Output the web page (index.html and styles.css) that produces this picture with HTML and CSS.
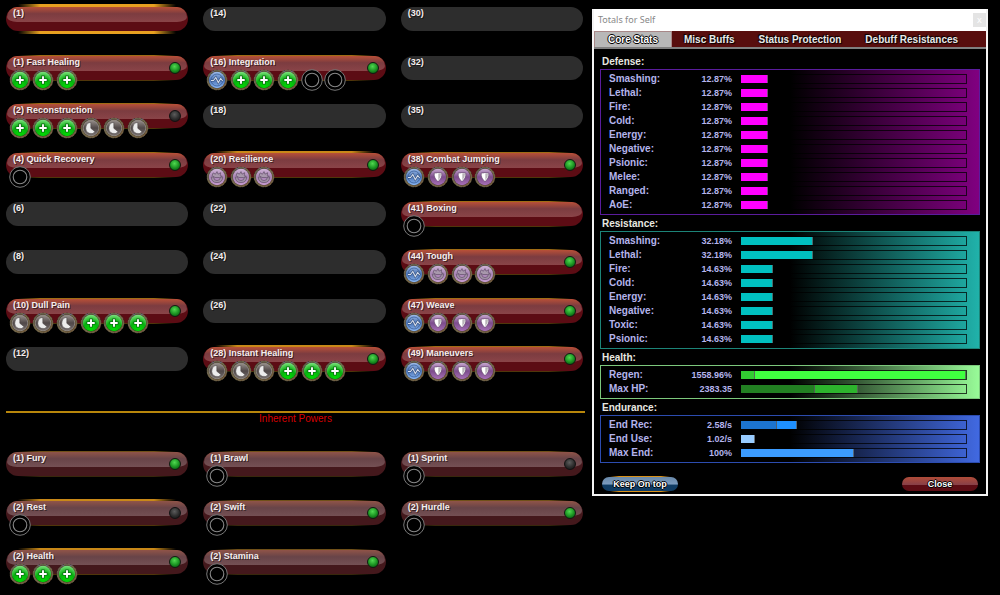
FILE: index.html
```html
<!DOCTYPE html>
<html lang="en">
<head>
<meta charset="utf-8">
<title>Totals for Self</title>
<link rel="stylesheet" href="styles.css">
</head>
<body>
<svg class="defs" width="0" height="0" aria-hidden="true">
  <defs>
    <radialGradient id="gGreen" cx="50%" cy="80%" r="85%"><stop offset="0" stop-color="#00e000"/><stop offset=".5" stop-color="#08b010"/><stop offset="1" stop-color="#90e890"/></radialGradient>
    <linearGradient id="gBlue" x1="0" y1="0" x2="0" y2="1"><stop offset="0" stop-color="#a0bce8"/><stop offset=".5" stop-color="#4c74b4"/><stop offset="1" stop-color="#8cb8f4"/></linearGradient>
    <linearGradient id="gPurple" x1="0" y1="0" x2="0" y2="1"><stop offset="0" stop-color="#c8a8d0"/><stop offset=".5" stop-color="#7c4c8c"/><stop offset="1" stop-color="#a870b8"/></linearGradient>
    <linearGradient id="gLilac" x1="0" y1="0" x2="0" y2="1"><stop offset="0" stop-color="#d0b4d8"/><stop offset=".5" stop-color="#a884b4"/><stop offset="1" stop-color="#c89cd0"/></linearGradient>
    <linearGradient id="gGrey" x1="0" y1="0" x2="0" y2="1"><stop offset="0" stop-color="#98908c"/><stop offset=".5" stop-color="#504848"/><stop offset="1" stop-color="#787070"/></linearGradient>
    <linearGradient id="gRing" x1="0" y1="0" x2="1" y2="1"><stop offset="0" stop-color="#5c574c"/><stop offset=".5" stop-color="#786a48"/><stop offset=".85" stop-color="#705838"/><stop offset="1" stop-color="#b04830"/></linearGradient>
  </defs>
  <symbol id="ring" viewBox="0 0 22 22">
    <circle cx="11" cy="11" r="10.3" fill="#2a241a"/>
    <circle cx="11" cy="11" r="9.2" fill="none" stroke="url(#gRing)" stroke-width="1.6"/>
    <circle cx="11" cy="11" r="9.8" fill="none" stroke="#7c745c" stroke-width=".7" stroke-dasharray="2.4 1.5"/>
    <path d="M6.5 1.8l1.5 1.6M15.5 1.8L14 3.4" stroke="#6c6498" stroke-width="1"/>
  </symbol>
  <symbol id="heal" viewBox="0 0 22 22"><use href="#ring"/><circle cx="11" cy="11" r="8.2" fill="url(#gGreen)"/><path d="M11 6.600v8.800M6.600 11h8.800" stroke="#0c5c14" stroke-width="3.200"/><path d="M11 7.300v7.400M7.300 11h7.400" stroke="#fff" stroke-width="1.900"/></symbol>
  <symbol id="end" viewBox="0 0 22 22"><use href="#ring"/><circle cx="11" cy="11" r="8.2" fill="url(#gBlue)"/><circle cx="11" cy="11" r="6" fill="none" stroke="#38609c" stroke-width=".8"/><path d="M5 11.500h2.500l2.300-3 2.500 5 2.400-4 2 2.500" fill="none" stroke="#34507c" stroke-width="2.200"/><path d="M5 11.500h2.500l2.300-3 2.500 5 2.400-4 2 2.500" fill="none" stroke="#d4dcec" stroke-width="1.100"/></symbol>
  <symbol id="def" viewBox="0 0 22 22"><use href="#ring"/><circle cx="11" cy="11" r="8.2" fill="url(#gPurple)"/><path d="M7.200 7q3.800 0 3.800-.6 0 .6 3.800.6.400 5.400-3.800 8.600-4.200-3.200-3.800-8.600z" fill="#fff" stroke="#583860" stroke-width=".6"/><path d="M11.300 7.600h2.700q.2 4-2.700 6.800z" fill="#b8b4b8"/></symbol>
  <symbol id="res" viewBox="0 0 22 22"><use href="#ring"/><circle cx="11" cy="11" r="8.2" fill="url(#gLilac)"/><path d="M5.300 11h2.200q.4 3.600 3.500 3.600t3.500-3.600h2.200q-.2 5.600-5.700 5.600T5.300 11z" fill="#a090a4" stroke="#6c5874" stroke-width=".8"/><path d="M6 9.500l1.200-2.600 2.200 1.300L11 5.600l1 2.600 2.700-1.500-.5 2.800 2 .8-2.700 1.200H9z" fill="#a898ac" stroke="#6c5874" stroke-width=".8"/></symbol>
  <symbol id="rech" viewBox="0 0 22 22"><use href="#ring"/><circle cx="11" cy="11" r="7.800" fill="url(#gGrey)" stroke="#a8a098" stroke-width=".7"/><path d="M10.800 5.500v5.800l4.300 3.400a5.300 5.300 0 0 1-9.400-3.400q0-4.300 3.200-5.600z" fill="#ececec" stroke="#3c3838" stroke-width=".5"/></symbol>
  <symbol id="empty" viewBox="0 0 22 22"><circle cx="11" cy="11" r="10.300" fill="#000" stroke="#777" stroke-width="1"/><circle cx="11" cy="11" r="6.800" fill="none" stroke="#888" stroke-width="1.100"/></symbol>
</svg>

<div class="app">
  <main class="build">
    <ul class="powers powers-chosen">
      <li class="power glow-full"><button class="pill">(1)</button></li>
      <li class="power"><button class="pill">(1) Fast Healing<i class="led"></i></button><div class="slots"><svg><use href="#heal"/></svg><svg><use href="#heal"/></svg><svg><use href="#heal"/></svg></div></li>
      <li class="power"><button class="pill">(2) Reconstruction<i class="led off"></i></button><div class="slots"><svg><use href="#heal"/></svg><svg><use href="#heal"/></svg><svg><use href="#heal"/></svg><svg><use href="#rech"/></svg><svg><use href="#rech"/></svg><svg><use href="#rech"/></svg></div></li>
      <li class="power"><button class="pill">(4) Quick Recovery<i class="led"></i></button><div class="slots"><svg><use href="#empty"/></svg></div></li>
      <li class="power vacant"><button class="pill">(6)</button></li>
      <li class="power vacant"><button class="pill">(8)</button></li>
      <li class="power"><button class="pill">(10) Dull Pain<i class="led"></i></button><div class="slots"><svg><use href="#rech"/></svg><svg><use href="#rech"/></svg><svg><use href="#rech"/></svg><svg><use href="#heal"/></svg><svg><use href="#heal"/></svg><svg><use href="#heal"/></svg></div></li>
      <li class="power vacant"><button class="pill">(12)</button></li>

      <li class="power vacant"><button class="pill">(14)</button></li>
      <li class="power"><button class="pill">(16) Integration<i class="led"></i></button><div class="slots"><svg><use href="#end"/></svg><svg><use href="#heal"/></svg><svg><use href="#heal"/></svg><svg><use href="#heal"/></svg><svg><use href="#empty"/></svg><svg><use href="#empty"/></svg></div></li>
      <li class="power vacant"><button class="pill">(18)</button></li>
      <li class="power glow-top"><button class="pill">(20) Resilience<i class="led"></i></button><div class="slots"><svg><use href="#res"/></svg><svg><use href="#res"/></svg><svg><use href="#res"/></svg></div></li>
      <li class="power vacant"><button class="pill">(22)</button></li>
      <li class="power vacant"><button class="pill">(24)</button></li>
      <li class="power vacant"><button class="pill">(26)</button></li>
      <li class="power glow-top"><button class="pill">(28) Instant Healing<i class="led"></i></button><div class="slots"><svg><use href="#rech"/></svg><svg><use href="#rech"/></svg><svg><use href="#rech"/></svg><svg><use href="#heal"/></svg><svg><use href="#heal"/></svg><svg><use href="#heal"/></svg></div></li>

      <li class="power vacant"><button class="pill">(30)</button></li>
      <li class="power vacant"><button class="pill">(32)</button></li>
      <li class="power vacant"><button class="pill">(35)</button></li>
      <li class="power"><button class="pill">(38) Combat Jumping<i class="led"></i></button><div class="slots"><svg><use href="#end"/></svg><svg><use href="#def"/></svg><svg><use href="#def"/></svg><svg><use href="#def"/></svg></div></li>
      <li class="power"><button class="pill">(41) Boxing</button><div class="slots"><svg><use href="#empty"/></svg></div></li>
      <li class="power"><button class="pill">(44) Tough<i class="led"></i></button><div class="slots"><svg><use href="#end"/></svg><svg><use href="#res"/></svg><svg><use href="#res"/></svg><svg><use href="#res"/></svg></div></li>
      <li class="power"><button class="pill">(47) Weave<i class="led"></i></button><div class="slots"><svg><use href="#end"/></svg><svg><use href="#def"/></svg><svg><use href="#def"/></svg><svg><use href="#def"/></svg></div></li>
      <li class="power"><button class="pill">(49) Maneuvers<i class="led"></i></button><div class="slots"><svg><use href="#end"/></svg><svg><use href="#def"/></svg><svg><use href="#def"/></svg><svg><use href="#def"/></svg></div></li>
    </ul>

    <h2 class="divider">Inherent Powers</h2>

    <ul class="powers powers-inherent">
      <li class="power"><button class="pill">(1) Fury<i class="led"></i></button></li>
      <li class="power glow-top"><button class="pill">(2) Rest<i class="led off"></i></button><div class="slots"><svg><use href="#empty"/></svg></div></li>
      <li class="power glow-top"><button class="pill">(2) Health<i class="led"></i></button><div class="slots"><svg><use href="#heal"/></svg><svg><use href="#heal"/></svg><svg><use href="#heal"/></svg></div></li>
      <li class="power"><button class="pill">(1) Brawl</button><div class="slots"><svg><use href="#empty"/></svg></div></li>
      <li class="power"><button class="pill">(2) Swift<i class="led"></i></button><div class="slots"><svg><use href="#empty"/></svg></div></li>
      <li class="power"><button class="pill">(2) Stamina<i class="led"></i></button><div class="slots"><svg><use href="#empty"/></svg></div></li>
      <li class="power"><button class="pill">(1) Sprint<i class="led off"></i></button><div class="slots"><svg><use href="#empty"/></svg></div></li>
      <li class="power"><button class="pill">(2) Hurdle<i class="led"></i></button><div class="slots"><svg><use href="#empty"/></svg></div></li>
    </ul>
  </main>

  <section class="totals">
    <header class="titlebar"><span>Totals for Self</span><button class="close-x" aria-label="Close window">x</button></header>
    <nav class="tabs">
      <button class="tab active">Core Stats</button>
      <button class="tab">Misc Buffs</button>
      <button class="tab">Status Protection</button>
      <button class="tab">Debuff Resistances</button>
    </nav>
    <div class="stats">
      <h3>Defense:</h3>
      <dl class="group defense">
        <div><dt>Smashing:</dt><dd>12.87%</dd><dd class="track"><i style="width:12%"></i></dd></div>
        <div><dt>Lethal:</dt><dd>12.87%</dd><dd class="track"><i style="width:12%"></i></dd></div>
        <div><dt>Fire:</dt><dd>12.87%</dd><dd class="track"><i style="width:12%"></i></dd></div>
        <div><dt>Cold:</dt><dd>12.87%</dd><dd class="track"><i style="width:12%"></i></dd></div>
        <div><dt>Energy:</dt><dd>12.87%</dd><dd class="track"><i style="width:12%"></i></dd></div>
        <div><dt>Negative:</dt><dd>12.87%</dd><dd class="track"><i style="width:12%"></i></dd></div>
        <div><dt>Psionic:</dt><dd>12.87%</dd><dd class="track"><i style="width:12%"></i></dd></div>
        <div><dt>Melee:</dt><dd>12.87%</dd><dd class="track"><i style="width:12%"></i></dd></div>
        <div><dt>Ranged:</dt><dd>12.87%</dd><dd class="track"><i style="width:12%"></i></dd></div>
        <div><dt>AoE:</dt><dd>12.87%</dd><dd class="track"><i style="width:12%"></i></dd></div>
      </dl>
      <h3>Resistance:</h3>
      <dl class="group resistance">
        <div><dt>Smashing:</dt><dd>32.18%</dd><dd class="track"><i style="width:32%"></i></dd></div>
        <div><dt>Lethal:</dt><dd>32.18%</dd><dd class="track"><i style="width:32%"></i></dd></div>
        <div><dt>Fire:</dt><dd>14.63%</dd><dd class="track"><i style="width:14%"></i></dd></div>
        <div><dt>Cold:</dt><dd>14.63%</dd><dd class="track"><i style="width:14%"></i></dd></div>
        <div><dt>Energy:</dt><dd>14.63%</dd><dd class="track"><i style="width:14%"></i></dd></div>
        <div><dt>Negative:</dt><dd>14.63%</dd><dd class="track"><i style="width:14%"></i></dd></div>
        <div><dt>Toxic:</dt><dd>14.63%</dd><dd class="track"><i style="width:14%"></i></dd></div>
        <div><dt>Psionic:</dt><dd>14.63%</dd><dd class="track"><i style="width:14%"></i></dd></div>
      </dl>
      <h3>Health:</h3>
      <dl class="group health">
        <div><dt>Regen:</dt><dd>1558.96%</dd><dd class="track"><i class="regen-base" style="width:6%"></i><i class="regen" style="width:94%"></i></dd></div>
        <div><dt>Max HP:</dt><dd>2383.35</dd><dd class="track"><i class="hp-base" style="width:33%"></i><i class="hp" style="width:19%"></i></dd></div>
      </dl>
      <h3>Endurance:</h3>
      <dl class="group endurance">
        <div><dt>End Rec:</dt><dd>2.58/s</dd><dd class="track"><i class="rec-base" style="width:16%"></i><i class="rec" style="width:9%"></i></dd></div>
        <div><dt>End Use:</dt><dd>1.02/s</dd><dd class="track"><i class="use" style="width:6%"></i></dd></div>
        <div><dt>Max End:</dt><dd>100%</dd><dd class="track"><i class="max" style="width:50%"></i></dd></div>
      </dl>
      <footer class="actions">
        <button class="action keep">Keep On top</button>
        <button class="action">Close</button>
      </footer>
    </div>
  </section>
</div>
</body>
</html>
```
FILE: styles.css
```css
* { box-sizing: border-box; }
body { margin: 0; background: #000; color: #fff; font: bold 9px/12px "Liberation Sans", Arial, sans-serif; }
button { font: inherit; color: inherit; border: 0; margin: 0; padding: 0; background: none; }
ul, dl, dd, h2, h3 { margin: 0; padding: 0; font: inherit; }
.defs { position: absolute; }

.app { display: grid; grid-template-columns: minmax(0, 1fr) 396px; align-items: start; padding-right: 12px; }

/* Power list */
.build { padding: 7px 7px 0 6px; }
.powers { display: grid; grid-template-columns: repeat(3, minmax(0, 1fr)); grid-auto-flow: column; column-gap: 15px; list-style: none; margin-right: 2px; }
.powers-chosen { grid-template-rows: repeat(8, 1fr); min-height: 389px; }
.powers-inherent { grid-template-rows: 1fr 1fr auto; min-height: 133px; margin-top: 27px; }

.power { position: relative; --up: 1px; --down: 1px; --gold: #a06c14; --shade: rgba(0, 0, 0, .5); --low: #5c0c14; --gloss: linear-gradient(#b85038, #7c3c40 45%, #8a4448); }
.power::before { content: ""; position: absolute; top: calc(0px - var(--up)); left: 12px; right: 12px; height: calc(24px + var(--up) + var(--down)); background: linear-gradient(transparent 60%, var(--shade) 61%), linear-gradient(to right, #000, var(--gold) 14%, var(--gold) 86%, #000); }
.glow-top { --up: 2px; --gold: #c88818; --shade: rgba(0, 0, 0, .6); }
.glow-full { --up: 3px; --down: 3px; --gold: #e8a020; --shade: transparent; }
.vacant { --low: #2d2d2d; --gloss: none; }
.vacant::before { display: none; }
.powers-inherent .power { --low: #44181c; --gloss: linear-gradient(#905448, #684448 45%, #745054); }
.powers-inherent .power:not(.glow-top) { --gold: #705018; }

.pill { position: relative; z-index: 0; display: flex; justify-content: space-between; align-items: flex-start; width: 100%; height: 24px; padding: 0 7px; border-radius: 12px; background: var(--low); text-align: left; text-shadow: 1px 1px 0 rgba(0, 0, 0, .5); color: #f4eeee; }
.pill::before { content: ""; position: absolute; z-index: -1; top: 0; left: 1px; right: 1px; height: 15px; border-radius: 10px 10px 10px 10px / 10px 10px 5px 5px; background: var(--gloss); }
.led { align-self: center; width: 12px; height: 12px; border-radius: 50%; border: 1px solid #101c10; background: radial-gradient(circle at 45% 35%, #50d850, #189020 55%, #083c0c); }
.led.off { border-color: #111; background: radial-gradient(circle at 45% 35%, #5c5c5c, #2c2c2c 55%, #111); }

.slots { position: relative; display: grid; grid-template-columns: repeat(6, 1fr); justify-items: center; width: 142px; margin: -11px 0 0 2px; }
.slots svg { display: block; width: 22px; height: 22px; }

.divider { margin-top: 15px; border-top: 2px solid #b8860b; height: 14px; font-weight: normal; font-size: 10px; color: #d80000; text-align: center; }

/* Totals window */
.totals { margin-top: 9px; border: 2px solid #f4f4f4; border-top: 0; background: #000; }
.titlebar { display: flex; justify-content: space-between; align-items: center; height: 22px; padding-left: 4px; background: #fff; color: #888; font: 9px/12px "Noto Sans", "Open Sans", sans-serif; }
.close-x { width: 13px; height: 14px; background: #e4e4e4; color: #fff; line-height: 12px; }
.tabs { display: flex; height: 18px; background: #580e0e; border-bottom: 2px solid #808080; font-size: 10px; }
.tab { padding: 2px 12px 0; text-shadow: 1px 1px 1px #000, -1px -1px 1px #000; color: #e8e8e8; white-space: nowrap; }
.tab.active { width: 78px; border: 1px solid #a88888; border-bottom: 0; background: #b8b8b8; color: #fff; padding: 1px 0 0; }
.tab.active, .action { text-shadow: 1px 0 #000, -1px 0 #000, 0 1px #000, 0 -1px #000; }

.stats { padding: 4px 6px 3px; font-size: 10px; }
.stats h3 { padding: 1px 0 0 2px; line-height: 15px; color: #e8e8e0; }
.group { padding: 2px 12px 2px 8px; border: 1px solid var(--edge); background: linear-gradient(to right, #000 50%, var(--tint)); color: #b4b4ec; }
.group div { display: grid; grid-template-columns: 59px 64px minmax(0, 1fr); align-items: center; height: 14px; line-height: 14px; }
.group dd { text-align: right; font-size: 9px; }
.group .track { display: flex; height: 10px; margin-left: 8px; border: 1px solid rgba(0, 0, 0, .75); }
.track i { border-right: 1px solid rgba(90, 90, 90, .8); background: var(--fill); }
.defense { --edge: #5a1c9c; --tint: #800080; --fill: #ff00ff; }
.resistance { --edge: #1c8478; --tint: #20b2aa; --fill: #00c0c0; }
.health { --edge: #7cc87c; --tint: #98fb98; }
.endurance { --edge: #2c4cb0; --tint: #4169e1; }
.regen-base { --fill: #32cd32; }
.regen { --fill: #40ff40; }
.hp-base { --fill: #228022; }
.hp { --fill: #2db42d; }
.rec-base { --fill: #1c74d0; }
.rec { --fill: #1e90ff; }
.use { --fill: #98ccff; }
.max { --fill: #3c9cff; }

.actions { display: flex; justify-content: space-between; margin-top: 14px; padding: 0 2px; }
.action { position: relative; width: 76px; height: 14px; border-radius: 7px; font-size: 9px; background: linear-gradient(#b04c38, #884048 55%, #5c0c14 60%, #5c0c14); }
.action.keep { background: linear-gradient(#6888a8, #7c9cc0 50%, #103c64 58%, #103c64); }
.action.keep::before { content: ""; position: absolute; inset: -1px 8px; background: linear-gradient(to right, transparent, #d89018 15%, #d89018 85%, transparent) top / 100% 1px no-repeat, linear-gradient(to right, transparent, #d89018 15%, #d89018 85%, transparent) bottom / 100% 1px no-repeat; }
```
